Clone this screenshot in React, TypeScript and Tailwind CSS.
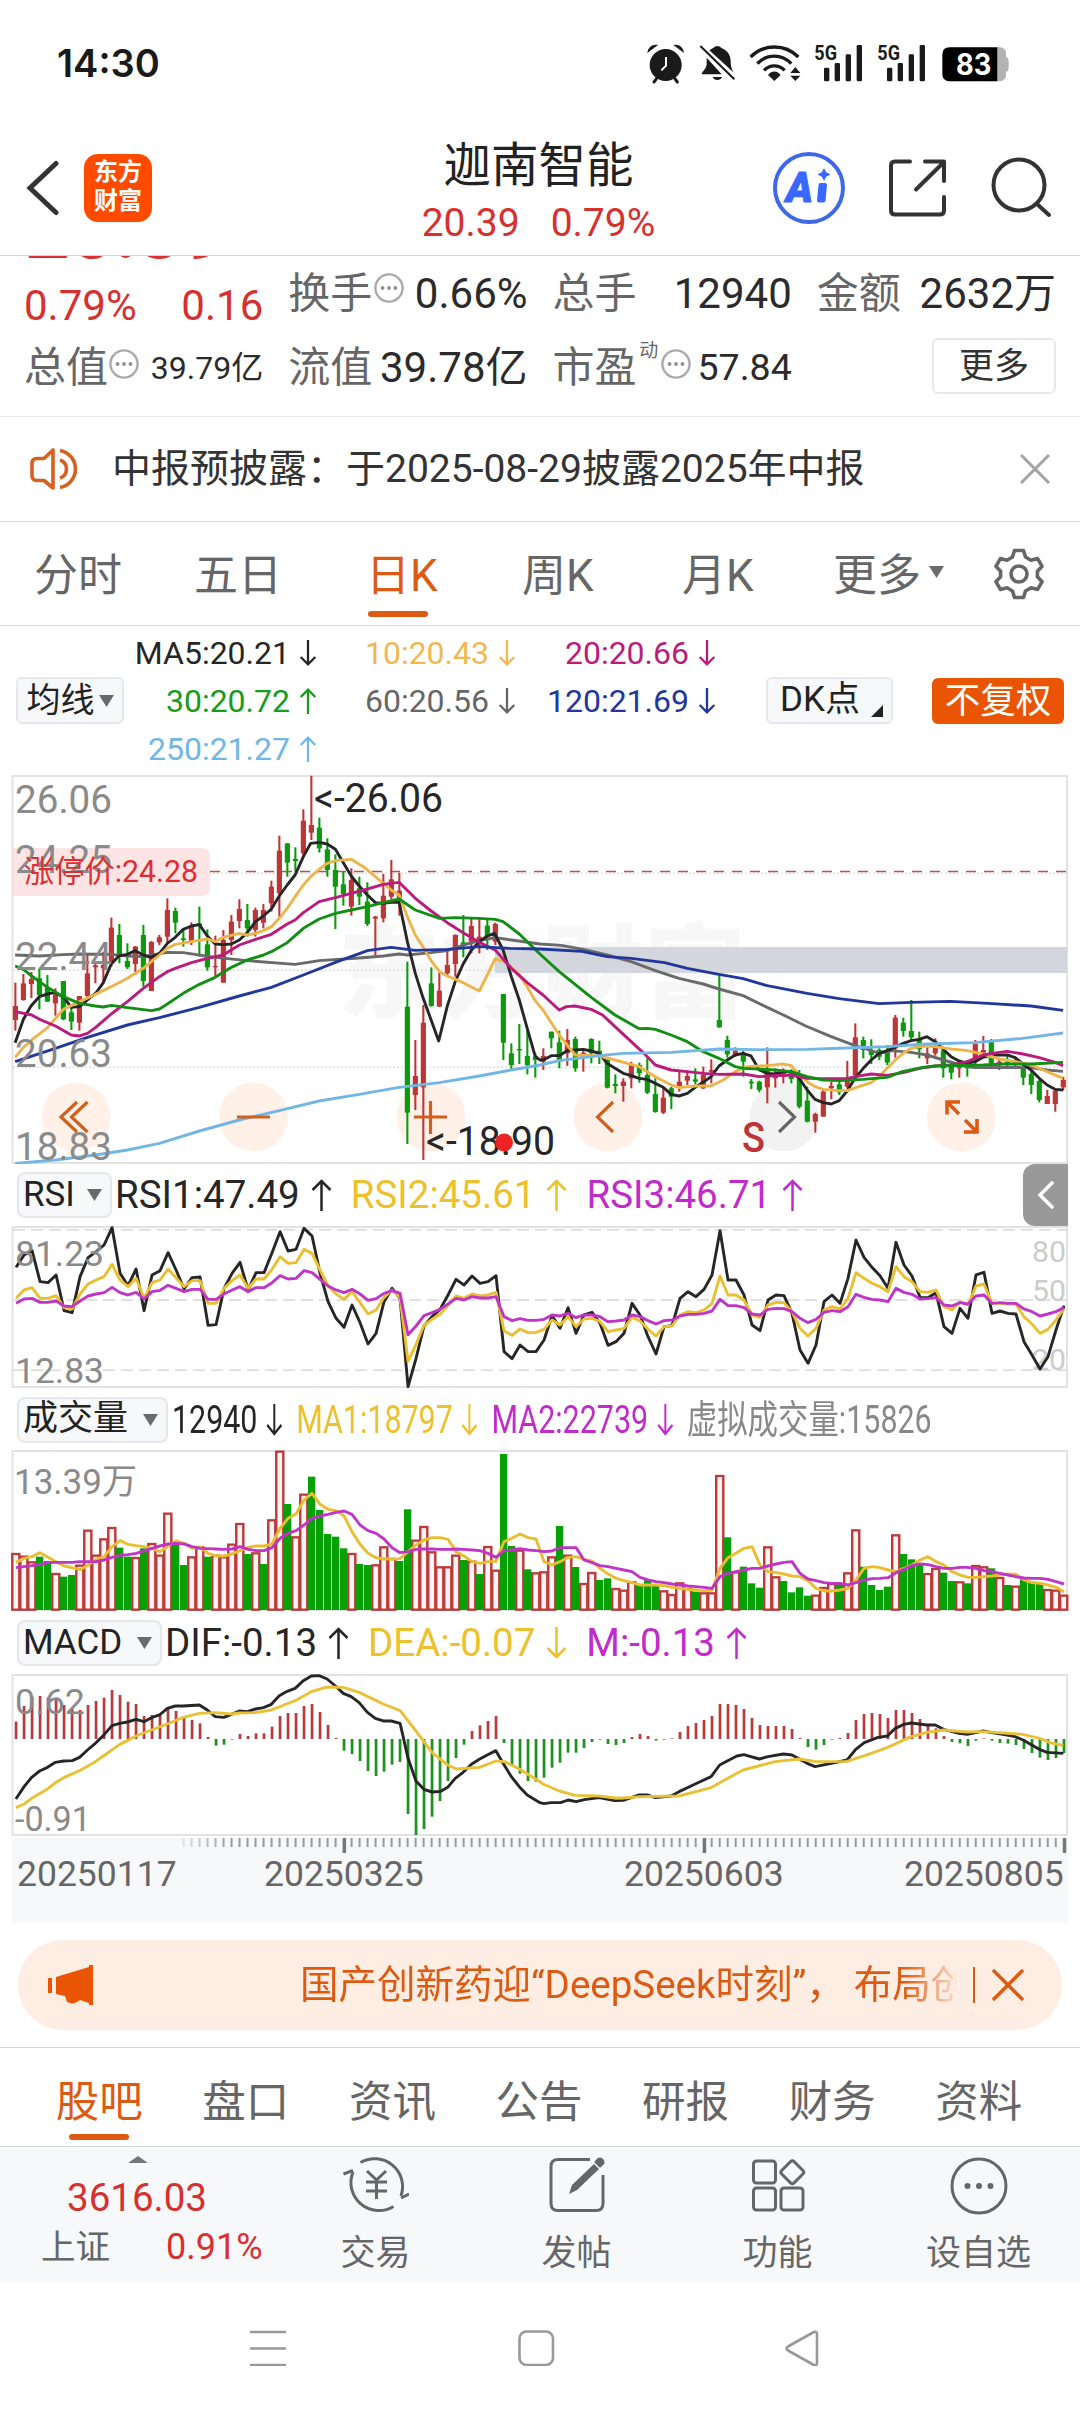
import React from "react";

// candle i sits at START + i * STEP on the shared plot grid (1 unit = 1/2.904 px wide, 1/3 px high)
const START = 44.7;
const STEP = 23.23;
const cx = (i: number) => START + i * STEP;

const RED = "#be3535";
const GREEN = "#0a9a0c";

// direction, high, low, body top, body bottom
const CANDLES = `r668,812,738,780 r642,722,670,720 r636,714,657,672 g625,748,655,705 g645,725,682,725 r685,767,703,730 g663,780,663,778 g735,810,757,785 r708,812,708,788 r580,712,640,708
r610,670,616,622 r575,665,615,625 r473,620,503,610 g492,610,525,585 g550,627,603,622 r558,645,560,612 g495,680,525,663 r543,693,546,693 r525,555,532,547 r415,550,450,530
g443,520,453,488 g510,560,535,540 r487,555,497,545 g440,590,490,497 g508,632,553,622 r527,653,618,622 r510,668,540,668 r465,585,485,540 r418,505,447,483 g432,530,480,505
r443,530,450,510 r432,505,450,488 r362,455,380,430 r227,470,272,400 g250,350,250,308 g262,335,297,303 r148,290,182,280 r47,240,195,218 g173,278,203,265 g235,350,268,330
g283,507,330,380 g335,437,373,402 r325,467,360,440 g350,435,385,410 g367,498,425,492 r468,587,470,476 r342,487,407,475 r300,418,358,410 r338,467,392,420 g605,1152,740,1058
r840,1050,948,1005 r735,1200,788,982 g622,740,670,738 r637,740,692,740 r570,645,615,640 r523,650,525,612 g465,592,547,558 r477,580,498,545 r477,580,530,545 g475,570,497,530
r488,555,492,545 g702,900,702,848 g850,928,880,915 g792,912,867,870 g810,943,888,915 g880,953,890,900 r865,930,888,905 g815,865,815,835 g812,925,847,905 r807,918,840,880
g830,935,837,925 r870,935,878,890 g835,910,837,880 g842,912,872,890 g895,985,900,983 g943,1000,972,978 r955,1025,965,978 r905,985,912,955 g908,968,915,940 g893,1002,945,998
g955,1058,1002,1056 r980,1062,1013,1058 g980,1047,985,1010 r932,995,965,980 r933,975,948,962 g925,973,958,965 r920,987,945,985 r898,970,930,935 g645,803,780,802 g827,893,840,883
r862,890,872,888 g872,950,880,905 g957,987,965,970 g962,997,965,990 r862,1030,930,982 r925,983,940,955 r925,970,935,950 g928,970,935,957 g930,1045,945,1040 g980,1087,1022,1085
r1058,1118,1062,1085 r990,1070,995,1070 r965,1018,978,985 g962,1005,973,997 r903,985,955,980 r790,955,832,945 g830,895,840,870 g838,912,870,885 g865,900,870,890 g855,915,870,908
r765,893,773,865 g773,830,788,813 g720,840,813,832 g815,895,840,868 r862,912,880,895 r835,887,862,880 g865,953,872,925 g905,958,912,938 r905,953,915,925 g900,950,912,925
r840,915,852,900 r828,885,870,878 g837,925,840,910 r895,930,905,915 g885,925,905,915 g890,922,903,915 g915,975,925,953 g928,1002,942,975 g960,1027,963,1020 r990,1032,1008,1032
r985,1055,992,1032 r950,990,960,982`
  .split(/\s+/)
  .map((s) => ({ up: s[0] === "r", v: s.slice(1).split(",").map(Number) }));

const MA_LINES = [
  {
    color: "#6a6a6a",
    points:
      "44,585 115,588 184,584 231,582 323,583 370,588 416,590 486,577 532,578 625,592 718,602 857,613 927,602 1043,594 1113,588 1159,582 1183,585 1252,578 1299,572 1345,555 1392,542 1438,533 1485,540 1568,552 1630,556 1694,568 1763,585 1833,605 1903,632 1972,655 2042,672 2088,687 2158,707 2228,742 2275,765 2340,798 2414,830 2483,857 2520,868 2553,880 2590,872 2645,877 2692,885 2740,900 2800,918 2830,923 2925,922 2994,923 3041,930 3087,934",
  },
  {
    color: "#262626",
    points:
      "44,848 68,778 90,738 114,710 138,702 158,697 185,712 207,742 231,740 254,720 280,697 300,668 323,612 345,588 370,583 393,572 416,585 438,592 463,580 486,550 509,532 532,508 556,498 579,494 602,528 625,552 648,554 672,552 695,540 718,518 742,485 765,468 788,447 811,408 834,375 857,345 881,290 902,250 927,247 950,252 974,268 997,308 1020,348 1043,378 1067,405 1090,428 1113,430 1136,427 1159,426 1183,545 1206,640 1229,715 1252,780 1274,843 1299,738 1322,665 1345,612 1369,570 1392,545 1415,528 1436,520 1461,570 1485,650 1508,720 1531,805 1554,888 1568,900 1577,900 1601,887 1624,887 1647,872 1670,870 1694,868 1717,873 1740,880 1763,910 1786,925 1810,940 1833,947 1856,955 1879,958 1903,970 1926,982 1949,1003 1972,1008 1996,1000 2019,982 2042,967 2065,950 2088,918 2112,900 2135,885 2158,880 2181,888 2205,930 2228,940 2251,942 2274,935 2298,935 2321,955 2344,990 2367,1018 2391,1028 2414,1032 2437,1022 2460,993 2483,955 2507,925 2530,900 2553,880 2576,872 2600,862 2623,850 2646,842 2669,838 2692,830 2716,845 2739,868 2762,890 2785,903 2809,910 2832,905 2855,892 2878,885 2902,885 2925,885 2948,893 2971,912 2994,930 3018,955 3041,975 3064,988 3088,990",
  },
  {
    color: "#eeb44c",
    points:
      "44,892 68,862 92,840 138,803 184,748 231,725 277,703 323,680 370,655 416,625 463,585 486,565 509,553 556,545 602,537 625,545 648,532 695,520 718,525 742,520 765,512 788,500 811,475 834,445 857,410 881,375 904,348 927,328 950,310 974,302 1020,298 1055,320 1090,350 1136,390 1159,405 1183,470 1206,525 1229,562 1252,602 1276,635 1299,648 1345,668 1392,693 1415,645 1438,597 1461,603 1485,622 1508,645 1531,680 1554,722 1577,750 1624,825 1670,885 1740,888 1786,900 1856,920 1903,950 1949,975 1972,983 2019,978 2065,978 2100,960 2135,935 2170,920 2228,917 2274,912 2298,917 2321,945 2344,965 2367,980 2391,988 2437,992 2460,992 2500,978 2530,968 2553,950 2576,925 2600,900 2623,880 2646,865 2680,858 2716,860 2762,867 2809,872 2855,882 2902,897 2948,905 2994,915 3041,935 3087,955",
  },
  {
    color: "#bb1b7c",
    points:
      "44,755 92,765 115,778 161,798 207,825 231,828 254,820 277,803 323,762 370,725 416,685 463,650 486,635 509,625 556,608 602,595 648,585 695,555 742,538 788,523 834,492 857,480 881,458 927,425 974,413 1020,400 1067,387 1113,373 1159,367 1206,415 1252,453 1299,488 1345,518 1392,547 1438,570 1485,625 1531,668 1577,705 1624,750 1645,740 1670,738 1717,748 1750,765 1786,800 1833,845 1870,880 1903,915 1949,930 1996,935 2042,940 2088,943 2158,942 2205,950 2251,947 2298,945 2344,955 2391,956 2460,956 2483,950 2530,942 2576,946 2623,938 2670,925 2716,918 2762,915 2809,905 2855,885 2902,877 2925,874 2971,882 3018,893 3064,907 3087,917",
  },
  {
    color: "#118f14",
    points:
      "44,618 68,628 92,648 138,682 184,710 231,730 277,738 300,741 323,736 370,743 440,752 463,747 486,732 532,700 579,673 625,652 672,622 718,600 765,585 788,575 834,548 881,505 927,477 974,460 1020,450 1067,440 1113,428 1159,417 1206,450 1276,475 1322,473 1392,475 1438,478 1461,485 1508,522 1568,582 1624,635 1717,712 1786,765 1856,806 1880,805 1903,808 1949,825 1996,845 2042,875 2088,895 2135,920 2160,925 2251,930 2298,935 2344,950 2391,960 2437,962 2506,958 2576,952 2620,935 2680,922 2716,918 2855,915 2920,912 2994,912 3087,907",
  },
  {
    color: "#22379c",
    points:
      "44,905 161,865 254,832 370,795 463,773 579,742 695,708 788,682 881,645 974,607 1067,572 1113,565 1136,562 1206,571 1299,568 1392,560 1480,565 1568,567 1690,574 1763,590 1833,595 1930,608 1996,625 2088,643 2158,656 2228,677 2344,700 2437,716 2553,731 2646,727 2760,724 2870,730 2994,738 3087,751",
  },
  {
    color: "#72b6e6",
    points:
      "44,1210 161,1200 277,1185 370,1170 463,1150 579,1113 695,1080 811,1052 927,1023 1043,1003 1159,982 1276,968 1392,948 1485,930 1568,915 1624,902 1740,887 1810,880 1949,877 2090,867 2200,869 2344,868 2460,864 2576,860 2692,852 2830,848 2970,835 3087,819",
  },
];

const RSI1 = [
  322, 285, 272, 365, 368, 345, 452, 458, 350, 293, 275, 255, 203, 340, 377, 327, 452, 345, 332, 278, 330, 387, 353, 351, 496, 494, 385, 340, 307, 390, 338, 338, 278,
  215, 273, 268, 205, 228, 340, 425, 475, 502, 435, 488, 552, 520, 425, 385, 415, 680, 595, 497, 470, 448, 405, 358, 375, 348, 370, 365, 347, 575, 596, 555, 575, 575,
  540, 467, 505, 443, 520, 465, 457, 490, 556, 545, 520, 430, 465, 530, 582, 500, 497, 415, 395, 410, 388, 345, 212, 360, 360, 405, 495, 512, 420, 405, 407, 460, 570,
  610, 555, 425, 405, 430, 355, 240, 292, 322, 347, 385, 247, 315, 348, 412, 413, 398, 500, 520, 445, 475, 345, 337, 460, 453, 460, 462, 545, 585, 627, 590, 510, 437,
];
const RSI2 = [
  415, 390, 383, 415, 415, 407, 443, 447, 402, 372, 360, 350, 313, 360, 380, 355, 415, 368, 360, 327, 353, 380, 362, 362, 430, 430, 385, 362, 345, 385, 357, 357, 328,
  290, 310, 308, 268, 280, 330, 378, 402, 418, 395, 428, 462, 450, 412, 390, 412, 604, 553, 495, 478, 463, 435, 408, 415, 402, 408, 405, 397, 512, 526, 507, 518, 517,
  508, 480, 495, 470, 500, 477, 475, 485, 515, 510, 505, 472, 483, 508, 528, 500, 498, 465, 455, 458, 450, 430, 348, 405, 405, 420, 465, 472, 435, 427, 428, 455, 505,
  528, 505, 450, 440, 447, 415, 338, 355, 370, 380, 395, 320, 350, 365, 395, 397, 390, 440, 450, 425, 435, 378, 372, 430, 430, 432, 432, 470, 492, 520, 508, 480, 445,
];
const RSI3 = [
  430, 417, 415, 427, 427, 423, 438, 440, 423, 408, 402, 398, 382, 398, 405, 397, 417, 395, 391, 376, 385, 395, 388, 388, 418, 418, 402, 390, 380, 395, 383, 383, 368,
  347, 357, 355, 332, 338, 358, 378, 390, 398, 388, 402, 421, 416, 400, 392, 400, 524, 498, 467, 458, 448, 432, 415, 420, 410, 414, 414, 410, 470, 482, 476, 481, 481,
  478, 465, 468, 460, 473, 465, 465, 470, 485, 483, 480, 465, 470, 482, 492, 482, 480, 468, 463, 463, 460, 453, 418, 437, 437, 443, 462, 465, 448, 445, 446, 455, 475,
  488, 478, 457, 452, 455, 440, 403, 412, 418, 420, 425, 385, 397, 403, 417, 416, 413, 435, 438, 428, 432, 408, 405, 430, 428, 430, 430, 447, 455, 468, 462, 455, 443,
];

const VOLUMES =
  "r1180 r1188 r1205 g1190 g1203 r1240 g1250 g1245 r1215 r1110 r1185 r1136 r1102 g1163 g1190 r1192 g1165 r1150 r1185 r1059 g1155 g1215 r1190 r1160 g1190 r1185 r1190 r1152 r1090 g1182 r1178 g1212 r1079 r873 g1032 r1130 r1002 g950 g1050 g1122 g1130 g1165 r1180 g1212 g1215 r1214 r1160 r1195 g1203 g1048 r1140 r1099 r1175 r1220 r1220 r1185 g1200 r1203 g1242 r1159 r1230 g882 g1158 r1170 g1228 r1238 r1235 r1190 g1098 r1185 g1221 r1270 r1237 g1260 g1255 r1285 r1290 r1265 g1275 g1258 g1275 r1292 r1303 r1268 r1285 g1295 r1298 r1298 r946 g1132 r1235 g1220 g1270 g1283 r1160 r1250 g1263 g1297 g1282 g1307 r1305 r1282 r1270 g1270 r1238 r1109 g1220 g1275 g1290 g1280 r1124 g1182 g1198 g1213 r1240 r1225 g1238 g1263 r1265 g1270 r1216 r1220 g1225 r1252 g1275 r1278 g1258 g1265 g1268 r1288 r1290 r1305"
    .split(" ")
    .map((s) => ({ up: s[0] === "r", y: Number(s.slice(1)) }));
const VOL_MA1 = [
  1207, 1195, 1190, 1178, 1192, 1205, 1218, 1223, 1229, 1215, 1198, 1190, 1160, 1142, 1153, 1157, 1160, 1165, 1175, 1158, 1143, 1150, 1165, 1160, 1180, 1188, 1188, 1182,
  1172, 1162, 1158, 1158, 1152, 1105, 1075, 1062, 1020, 1000, 1033, 1048, 1052, 1068, 1115, 1153, 1180, 1193, 1197, 1197, 1196, 1175, 1155, 1140, 1133, 1133, 1138, 1175,
  1188, 1205, 1210, 1205, 1204, 1145, 1135, 1122, 1133, 1137, 1205, 1215, 1205, 1192, 1190, 1198, 1203, 1225, 1242, 1255, 1262, 1268, 1275, 1275, 1275, 1277, 1282, 1285,
  1288, 1290, 1292, 1290, 1225, 1193, 1180, 1165, 1160, 1215, 1235, 1238, 1242, 1248, 1250, 1262, 1285, 1293, 1293, 1290, 1285, 1260, 1225, 1220, 1223, 1230, 1235, 1225,
  1215, 1200, 1190, 1205, 1215, 1235, 1245, 1252, 1252, 1250, 1248, 1245, 1242, 1243, 1260, 1268, 1270, 1275, 1282, 1295,
];
const VOL_MA2 = [
  1223, 1220, 1217, 1213, 1208, 1207, 1207, 1207, 1205, 1205, 1205, 1200, 1192, 1186, 1184, 1180, 1173, 1165, 1158, 1152, 1150, 1152, 1160, 1165, 1166, 1167, 1168, 1167,
  1160, 1168, 1172, 1172, 1163, 1135, 1120, 1112, 1095, 1075, 1068, 1063, 1057, 1053, 1063, 1095, 1112, 1120, 1137, 1163, 1178, 1175, 1168, 1167, 1167, 1168, 1168, 1167,
  1168, 1170, 1172, 1180, 1192, 1172, 1170, 1166, 1170, 1172, 1175, 1173, 1163, 1163, 1163, 1200, 1208, 1217, 1220, 1225, 1230, 1235, 1252, 1260, 1265, 1268, 1272, 1275,
  1278, 1280, 1282, 1285, 1250, 1240, 1235, 1230, 1225, 1225, 1218, 1212, 1207, 1205, 1240, 1257, 1262, 1268, 1270, 1270, 1275, 1268, 1260, 1256, 1255, 1253, 1238, 1228,
  1217, 1212, 1214, 1220, 1225, 1225, 1222, 1222, 1225, 1232, 1235, 1240, 1245, 1250, 1254, 1255, 1255, 1258, 1265, 1272,
];

const MACD_BARS = [
  365, 318, 290, 288, 292, 300, 315, 325, 330, 315, 303, 293, 270, 285, 305, 312, 348, 345, 345, 325, 333, 352, 360, 370, 411, 437, 434, 419, 402, 408, 400, 400, 380,
  348, 339, 339, 318, 312, 336, 375, 414, 452, 462, 483, 513, 528, 515, 494, 486, 642, 705, 687, 650, 603, 543, 474, 434, 393, 376, 363, 348, 429, 495, 521, 543, 545,
  533, 503, 488, 458, 458, 444, 426, 419, 432, 435, 429, 411, 402, 408, 422, 419, 415, 396, 378, 369, 360, 348, 312, 312, 315, 327, 354, 375, 378, 378, 378, 387, 414,
  441, 449, 435, 419, 414, 399, 360, 342, 339, 342, 354, 330, 330, 339, 357, 372, 385, 408, 426, 430, 438, 422, 415, 422, 429, 431, 435, 447, 459, 473, 480, 474, 459,
];
const DIF =
  "46,597 70,560 92,532 115,513 138,502 161,487 185,483 210,482 231,472 254,450 277,430 300,407 325,377 348,370 370,366 395,358 418,365 440,353 463,345 486,325 509,318 532,318 579,315 602,330 625,350 650,352 672,343 695,333 718,335 742,327 765,323 788,313 811,287 834,274 857,265 881,242 904,228 927,227 950,237 974,258 997,280 1020,290 1043,308 1067,337 1090,355 1113,363 1136,363 1162,370 1185,475 1208,543 1231,568 1255,576 1280,574 1300,562 1322,535 1345,517 1369,493 1392,478 1415,465 1440,452 1461,490 1485,530 1508,560 1531,585 1568,608 1580,611 1600,608 1628,608 1650,600 1673,605 1697,599 1740,593 1785,602 1810,601 1856,585 1880,585 1903,593 1949,588 1972,575 2019,552 2065,530 2090,495 2112,483 2140,468 2160,464 2205,477 2230,470 2275,462 2300,465 2344,490 2367,500 2414,490 2460,480 2485,448 2510,428 2550,412 2577,408 2600,385 2625,373 2646,369 2692,375 2716,375 2740,388 2785,400 2809,403 2855,393 2880,398 2925,405 2948,410 2971,420 3018,448 3041,457 3088,460";
const DEA =
  "46,623 70,612 92,595 138,567 161,548 185,533 231,512 277,485 300,468 348,433 370,422 395,408 440,390 486,372 532,352 579,340 625,338 672,342 695,339 742,338 788,330 857,302 904,275 950,261 997,262 1043,277 1113,312 1162,332 1208,393 1255,458 1300,495 1325,507 1392,502 1440,483 1465,485 1508,507 1568,545 1577,552 1624,573 1670,586 1740,588 1786,594 1810,594 1860,590 1972,588 2065,563 2090,548 2158,510 2251,485 2321,477 2370,485 2460,484 2530,460 2576,443 2646,410 2692,397 2740,390 2809,396 2855,395 2970,403 3020,415 3050,428 3088,437";

const toPoints = (values: number[]) => values.map((y, i) => `${cx(i) + 2},${y}`).join(" ");

const Line = ({ points, color, width = 2.9 }: { points: string; color: string; width?: number }) => (
  <polyline points={points} fill="none" stroke={color} strokeWidth={width} strokeLinejoin="round" vectorEffect="non-scaling-stroke" />
);

// Moves the plot grid so that grid row `base * 3` is the top of the panel
const Grid = ({ base, children }: { base: number; children: React.ReactNode }) => (
  <g transform={`translate(0 ${-base}) scale(0.34435 0.33333)`}>{children}</g>
);

interface LabelProps {
  x: number;
  y: number;
  w: number;
  size?: number;
  color?: string;
  children: string;
}

const Label = ({ x, y, w, size = 35, color = "#8a8a8a", children }: LabelProps) => (
  <text x={x} y={y} fontSize={size} fill={color} textLength={w} lengthAdjust="spacingAndGlyphs">
    {children}
  </text>
);

const Arrow = ({ up = false, small = false }: { up?: boolean; small?: boolean }) => (
  <svg viewBox="0 0 20 32" className={small ? "h-[26px] w-[18px]" : "h-8 w-[21px]"} fill="none" stroke="currentColor" strokeWidth={small ? 2.8 : 2.5}>
    {up ? <path d="M10 32V2M1 11l9-9 9 9" /> : <path d="M10 0v30M1 21l9 9 9-9" />}
  </svg>
);

const Caret = () => (
  <svg viewBox="0 0 15 12" className="h-3 w-[15px]" fill="#6a6a6a">
    <path d="M0 0h15L7.5 12z" />
  </svg>
);

const InfoDot = () => (
  <svg viewBox="0 0 30 30" className="h-[30px] w-[30px]" fill="none" stroke="#aaaaaa" strokeWidth="2.4">
    <circle cx="15" cy="15" r="13.6" />
    <g fill="#8f8f8f" stroke="none">
      <circle cx="8.6" cy="15" r="1.9" />
      <circle cx="15" cy="15" r="1.9" />
      <circle cx="21.4" cy="15" r="1.9" />
    </g>
  </svg>
);

const StatusBar = () => (
  <div className="flex h-[120px] items-center justify-between pt-[5px] pr-[70px] pl-[57px]">
    <span className="font-[Inter] text-[38px] leading-none font-semibold text-[#1a1a1a]">14:30</span>
    <svg viewBox="80 38 1092 120" className="h-10 w-[364px] overflow-visible" fill="#1a1a1a">
      {/* alarm */}
      <circle cx="139" cy="104" r="48" />
      <path d="M84 68c2-18 16-28 32-24zM194 68c-2-18-16-28-32-24z" />
      <path d="M112 144l-8 11M166 144l8 11" stroke="#1a1a1a" strokeWidth="9" strokeLinecap="round" />
      <path d="M140 80v26l-14 14" fill="none" stroke="#fff" strokeWidth="6" />
      {/* muted bell */}
      <path d="M262 82v18c0 16-14 22-15 32h60zM270 60c8-6 16-8 18-12h12c4 6 34 12 34 44 0 14 2 22 8 34z" />
      <path d="M280 140h28c-4 12-24 12-28 0z" />
      <path d="M243 47l102 100" stroke="#1a1a1a" strokeWidth="6" />
      {/* wifi */}
      <g fill="none" stroke="#1a1a1a" strokeWidth="10">
        <path d="M394 80c40-40 103-40 143 0" />
        <path d="M414 100c29-30 73-30 102 0" />
        <path d="M434 120c18-18 44-18 62 0" />
      </g>
      <path d="M446 134c11-14 27-14 38 0l-19 18z" />
      <path d="M513 128l15-18 15 18zM513 136l15 16 15-16z" />
      {/* signal bars */}
      <g id="bars">
        <rect x="614" y="112" width="16" height="41" rx="4" />
        <rect x="646" y="98" width="16" height="55" rx="4" />
        <rect x="679" y="72" width="16" height="81" rx="4" />
        <rect x="712" y="44" width="16" height="109" rx="4" />
      </g>
      <use href="#bars" x="189" />
      <g fontFamily="Roboto, sans-serif" fontWeight="700" fontSize="60">
        <text x="585" y="88" textLength="68" lengthAdjust="spacingAndGlyphs">5G</text>
        <text x="774" y="88" textLength="68" lengthAdjust="spacingAndGlyphs">5G</text>
      </g>
      {/* battery */}
      <path d="M1134 51h4c15 0 22 7 22 18v10q8 3 8 12v22q0 9-8 12v8c0 12-7 20-22 20h-4z" fill="#b3b3b3" />
      <path d="M991 51h143v102H991q-22 0-22-22V73q0-22 22-22z" fill="#000" />
      <text x="1010" y="135" fontFamily="Inter, sans-serif" fontWeight="700" fontSize="88" fill="#fff" textLength="106" lengthAdjust="spacingAndGlyphs">
        83
      </text>
    </svg>
  </div>
);

const Header = () => (
  <header className="flex h-[136px] items-center justify-between border-b border-[#d6d6d6] pr-[27px] pl-[26px]">
    <div className="flex w-[270px] items-center gap-[25px]">
      <svg viewBox="0 0 33 56" className="h-14 w-[33px]" fill="none" stroke="#333" strokeWidth="5" strokeLinecap="round">
        <path d="M30 3.500L4 28l26 24.500" />
      </svg>
      <p className="flex h-[68px] w-[68px] items-center justify-center rounded-[14px] bg-[#ff4a00] pb-[2px] text-center text-[24px] leading-[29px] font-bold text-white">
        东方
        <br />
        财富
      </p>
    </div>
    <div className="flex flex-col items-center pt-[11px] pl-[8px]">
      <h1 className="text-[47.500px] leading-[56px] text-[#222]">迦南智能</h1>
      <div className="mt-[4px] flex gap-[31px] text-[39px] leading-[50px] text-[#d6302f]">
        <span>20.39</span>
        <span>0.79%</span>
      </div>
    </div>
    <svg viewBox="0 0 280 72" className="h-[72px] w-[280px]" fill="none" stroke="#333" strokeWidth="4" strokeLinecap="round" strokeLinejoin="round">
      <circle cx="36" cy="36" r="34" stroke="#3f68e8" />
      <text x="13" y="49.500" fontSize="42" fontWeight="900" fontStyle="italic" fill="#3868ff" stroke="#3868ff" strokeWidth="1" textLength="27" lengthAdjust="spacingAndGlyphs">
        A
      </text>
      <path d="M47.500 33h4.500l-1.500 15.500H46z" fill="#3868ff" stroke="#3868ff" />
      <path d="M51 16l2.200 4.300 4.300 2.200-4.300 2.200-2.200 4.300-2.200-4.300-4.300-2.200 4.300-2.200z" fill="#3868ff" stroke="none" />
      <path d="M137 9.500h-15q-4 0-4 4v45q0 4 4 4h45q4 0 4-4V45" />
      <path d="M152 9.500h19V29M170 11l-27 26.500" />
      <circle cx="246" cy="33" r="25.500" />
      <path d="M264 52l12 11" />
    </svg>
  </header>
);

const Stat = ({ label, value, dot = false }: { label: string; value: string; dot?: boolean }) => (
  <div className="flex items-center justify-between text-[42px]">
    <span className="flex items-center text-[#666]">
      {label}
      {dot && (
        <span className="-mt-3 ml-[2px]">
          <InfoDot />
        </span>
      )}
    </span>
    <span className="text-[#2b2b2b]">{value}</span>
  </div>
);

const Quote = () => (
  <section className="h-[161px] overflow-hidden border-b border-[#ececec] px-[24px]">
    {/* big price has scrolled under the header */}
    <div className="h-[6px] overflow-hidden">
      <div className="-mt-[69px] ml-[1px] text-[78px] leading-[90px] font-bold text-[#dd2f2d]">20.39</div>
    </div>
    <div className="-mt-[7px] grid grid-cols-4 gap-x-[25px] leading-none">
      <div className="flex h-[78px] items-center justify-between pt-[23px] text-[42px] text-[#d6302f]">
        <span>0.79%</span>
        <span>0.16</span>
      </div>
      <Stat label="换手" value="0.66%" dot />
      <Stat label="总手" value="12940" />
      <Stat label="金额" value="2632万" />
      <div className="flex h-[70px] items-center justify-between text-[#666]">
        <span className="text-[42px]">总值</span>
        <span className="-mt-2 -ml-[10px]">
          <InfoDot />
        </span>
        <span className="text-[32px] text-[#2b2b2b]">39.79亿</span>
      </div>
      <Stat label="流值" value="39.78亿" />
      <div className="flex items-center justify-between text-[42px] text-[#666]">
        <span>市盈</span>
        <span className="-mt-9 -ml-1 text-[19px]">动</span>
        <span className="-mt-2 -ml-1">
          <InfoDot />
        </span>
        <span className="text-[37.500px] text-[#2b2b2b]">57.84</span>
      </div>
      <div className="flex items-center justify-end pb-1">
        <button className="h-[56px] w-[124px] rounded-md border-2 border-[#e8e8e8] text-[35px] text-[#333]">更多</button>
      </div>
    </div>
  </section>
);

const Announcement = () => (
  <section className="flex h-[105px] items-center border-b border-[#d6d6d6] pr-[30px] pl-[29px]">
    <svg viewBox="0 0 52 44" className="h-11 w-[52px]" fill="none" stroke="#d6601f" strokeWidth="3.600" strokeLinejoin="round">
      <path d="M24 3v38l-9-7.500H8q-5 0-5-5v-12q0-5 5-5h7z" />
      <path d="M31 13a9.500 9.500 0 0 1 0 18M31 3.500a18.800 18.800 0 0 1 0 37" />
    </svg>
    <p className="ml-[31px] text-[39px] text-[#333]">中报预披露：于2025-08-29披露2025年中报</p>
    <svg viewBox="0 0 30 30" className="ml-auto h-[30px] w-[30px]" stroke="#a3a3a3" strokeWidth="3">
      <path d="M1 1l28 28M29 1L1 29" />
    </svg>
  </section>
);

const PeriodTabs = () => (
  <nav className="flex h-[104px] items-center border-b border-[#d6d6d6] pl-[34px] text-[44px] text-[#666]">
    <span className="w-[160px] pt-[5px]">分时</span>
    <span className="w-[172px] pt-[5px]">五日</span>
    <span className="relative w-[156px] pt-[5px] text-[#dd5a12]">
      日K
      <i className="absolute -bottom-[8px] left-[2px] h-[6px] w-[60px] rounded-full bg-[#dd5a12]" />
    </span>
    <span className="w-[160px] pt-[5px]">周K</span>
    <span className="w-[151px] pt-[5px]">月K</span>
    <span className="flex w-[160px] items-center gap-[8px] pt-[5px]">
      更多
      <span className="-mt-2 flex">
        <Caret />
      </span>
    </span>
    <svg viewBox="0 0 52 52" className="h-[52px] w-[52px]" fill="none" stroke="#666" strokeWidth="3.600" strokeLinejoin="round">
      <path d="M21.500 2.500h9l2 6.500 5.500 3.200 6.600-1.600 4.500 7.700-4.700 5v5.400l4.700 5-4.500 7.700-6.600-1.600-5.500 3.200-2 6.500h-9l-2-6.500-5.500-3.200-6.600 1.600-4.500-7.700 4.700-5v-5.400l-4.700-5 4.500-7.700 6.600 1.600 5.500-3.200z" />
      <circle cx="26" cy="26" r="8" />
    </svg>
  </nav>
);

const MaItem = ({ text, color, up = false }: { text: string; color: string; up?: boolean }) => (
  <span className={`flex items-center justify-end gap-[9px] ${color}`}>
    {text}
    <Arrow up={up} small />
  </span>
);

const MaLegend = () => (
  <div className="flex h-[149px] items-center pr-[16px] pl-[16px]">
    <button className="flex h-[47px] w-[108px] items-center justify-center gap-[4px] rounded-md border-2 border-[#e5e7ea] bg-[#f7f8fa] text-[34px] text-[#222]">
      均线
      <Caret />
    </button>
    <div className="grid grid-cols-[193px_199px_200px] pt-px text-[32px] leading-[48px]">
      <MaItem text="MA5:20.21" color="text-[#262626]" />
      <MaItem text="10:20.43" color="text-[#f0b850]" />
      <MaItem text="20:20.66" color="text-[#bb1b7c]" />
      <MaItem text="30:20.72" color="text-[#189a1a]" up />
      <MaItem text="60:20.56" color="text-[#666]" />
      <MaItem text="120:21.69" color="text-[#22379c]" />
      <MaItem text="250:21.27" color="text-[#72b6e6]" up />
    </div>
    <button className="ml-[50px] flex h-[47px] w-[127px] items-center rounded-md border-2 border-[#e5e7ea] bg-[#f7f8fa] pl-[12px] text-[35px] text-[#222]">
      DK点
      <svg viewBox="0 0 12 12" className="mt-[20px] ml-[11px] h-3 w-3" fill="#222">
        <path d="M12 0v12H0z" />
      </svg>
    </button>
    <button className="ml-auto h-[46px] w-[132px] rounded-md bg-[#ea5504] text-[35.500px] leading-[44px] text-white">不复权</button>
  </div>
);

const Frame = ({ h }: { h: number }) => <rect x="12.500" y="1" width="1054.500" height={h} fill="none" stroke="#e2e2e2" strokeWidth="2" />;

const CandleChart = () => (
  <svg viewBox="0 0 1080 389" className="block h-[389px] w-full">
    <text x="338" y="235" fontSize="102" fontWeight="900" fill="#f7f7f7" textLength="408" lengthAdjust="spacingAndGlyphs">
      东方财富
    </text>
    {[98.300, 195.300, 292.300].map((y) => (
      <line key={y} x1="13" x2="1067" y1={y} y2={y} stroke="#dedede" strokeWidth="1.600" strokeDasharray="2 2" />
    ))}
    <Frame h={387} />
    <line x1="210" x2="1067" y1="96.500" y2="96.500" stroke="#bf5050" strokeWidth="1.600" strokeDasharray="10 8" />
    <rect x="495" y="172" width="572" height="26" fill="#d3d6dc" />
    <g fill="#fff0e8">
      {[76, 253.500, 431, 608, 961.500].map((x) => (
        <circle key={x} cx={x} cy="342" r="34.500" />
      ))}
      <circle cx="784" cy="342" r="34.500" fill="#f2f2f2" />
    </g>
    <Grid base={15}>
      {CANDLES.map(({ up, v }, i) => (
        <g key={i} fill={up ? RED : GREEN}>
          <rect x={cx(i) - 3} y={v[0]} width="6" height={v[1] - v[0]} />
          <rect x={cx(i) - 7.500} y={v[2]} width="15" height={Math.max(v[3] - v[2], 4)} />
        </g>
      ))}
      {MA_LINES.map((line) => (
        <Line key={line.color} {...line} />
      ))}
    </Grid>
    <path d="M12 73h190q8 0 8 8v32q0 8-8 8H12z" fill="#fcdcdc" fillOpacity="0.75" />
    <g>
      <Label x={15} y={38} w={97} size={39}>26.06</Label>
      <Label x={15} y={98} w={97} size={39}>24.25</Label>
      <Label x={15} y={194.500} w={97} size={39}>22.44</Label>
      <Label x={15} y={291.500} w={97} size={39}>20.63</Label>
      <Label x={15} y={385} w={97} size={39}>18.83</Label>
      <Label x={24} y={107} w={174} size={31} color="#dc3030">涨停价:24.28</Label>
      <Label x={314} y={37} w={129} size={40} color="#262626">&lt;-26.06</Label>
      <Label x={426} y={380} w={129} size={40} color="#262626">&lt;-18.90</Label>
    </g>
    <circle cx="504" cy="367.500" r="9" fill="#ee2222" />
    <g fill="none" stroke="#d0601c" strokeWidth="3.200">
      <path d="M77 327L61 342l16 15M87.500 327l-16 15 16 15" />
      <path d="M237 342h33M414 342h33M430.500 326v33" />
      <path d="M613 327l-15.500 15 15.500 15" />
      <path d="M779 327l15.500 15-15.500 15" stroke="#666" />
      <path d="M947 339.500V327h13M947 327l12 12M977 344v13h-13M977 357l-12-12" stroke="#dd5a12" strokeWidth="3.600" />
    </g>
    <text x="742" y="377" fontSize="42" fontWeight="500" fill="#bf3434" textLength="23" lengthAdjust="spacingAndGlyphs">
      S
    </text>
  </svg>
);

const IndicatorButton = ({ name, className }: { name: string; className: string }) => (
  <button className={`flex h-[46px] shrink-0 items-center justify-between rounded-lg border-2 border-[#e5e7ea] bg-[#f7f8fa] pr-[8px] pl-[4px] text-[35px] text-[#222] ${className}`}>
    {name}
    <Caret />
  </button>
);

const Reading = ({ text, color, up = false }: { text: string; color: string; up?: boolean }) => (
  <span className={`flex items-center gap-[11px] text-[38.500px] ${color}`}>
    {text}
    <Arrow up={up} />
  </span>
);

const RsiPanel = () => (
  <section>
    <div className="flex h-[62px] items-center pl-[17px]">
      <IndicatorButton name="RSI" className="w-[95px]" />
      <div className="ml-[3px] flex gap-[19px]">
        <Reading text="RSI1:47.49" color="text-[#262626]" up />
        <Reading text="RSI2:45.61" color="text-[#ecc12c]" up />
        <Reading text="RSI3:46.71" color="text-[#c22bcb]" up />
      </div>
      <div className="mr-[12px] ml-auto flex h-[62px] w-[45px] items-center justify-center rounded-l-xl bg-[#999]">
        <svg viewBox="0 0 16 28" className="h-7 w-4" fill="none" stroke="#fff" strokeWidth="3.600" strokeLinecap="round">
          <path d="M14 2L2 14l12 12" />
        </svg>
      </div>
    </div>
    <svg viewBox="0 0 1080 162" className="block h-[162px] w-full">
      <Frame h={160} />
      {[3.700, 74, 144.300].map((y) => (
        <line key={y} x1="13" x2="1067" y1={y} y2={y} stroke="#d8d8d8" strokeWidth="1.600" strokeDasharray="12 6" />
      ))}
      <Label x={1032} y={36} w={34} size={30} color="#cccccc">80</Label>
      <Label x={1032} y={74.500} w={34} size={30} color="#cccccc">50</Label>
      <Label x={1032} y={143.500} w={34} size={30} color="#cccccc">20</Label>
      <Grid base={66}>
        <Line points={toPoints(RSI1)} color="#262626" />
        <Line points={toPoints(RSI2)} color="#eac030" />
        <Line points={toPoints(RSI3)} color="#bf35c6" />
      </Grid>
      <Label x={15} y={40} w={89}>81.23</Label>
      <Label x={15} y={157} w={89}>12.83</Label>
    </svg>
  </section>
);

const VolumePanel = () => (
  <section>
    <div className="flex h-[62px] items-center pt-px pl-[17px]">
      <IndicatorButton name="成交量" className="w-[151px]" />
      <div className="ml-[4px] flex origin-left scale-x-[0.79] gap-[17px] whitespace-nowrap">
        <Reading text="12940" color="text-[#262626]" />
        <Reading text="MA1:18797" color="text-[#ecc12c]" />
        <Reading text="MA2:22739" color="text-[#c22bcb]" />
        <span className="text-[38.500px] text-[#888]">虚拟成交量:15826</span>
      </div>
    </div>
    <svg viewBox="0 0 1080 161" className="block h-[161px] w-full">
      <Frame h={160} />
      <Label x={14} y={43.500} w={123}>13.39万</Label>
      <Grid base={290}>
        {VOLUMES.map(({ up, y }, i) =>
          up ? (
            <rect key={i} x={cx(i) - 9} y={y + 2} width="20.500" height={1347 - y} fill="#fff4f3" stroke="#bb3a3a" strokeWidth="7" />
          ) : (
            <rect key={i} x={cx(i) - 10} y={y} width="21.500" height={1350 - y} fill="#07a007" />
          ),
        )}
        <Line points={toPoints(VOL_MA1)} color="#e9bd30" />
        <Line points={toPoints(VOL_MA2)} color="#bf35c6" />
      </Grid>
    </svg>
  </section>
);

const MacdPanel = () => (
  <section>
    <div className="flex h-[63px] items-center pt-px pl-[17px]">
      <IndicatorButton name="MACD" className="w-[145px]" />
      <div className="ml-[3px] flex gap-[19px]">
        <Reading text="DIF:-0.13" color="text-[#262626]" up />
        <Reading text="DEA:-0.07" color="text-[#ecc12c]" />
        <Reading text="M:-0.13" color="text-[#c22bcb]" up />
      </div>
    </div>
    <svg viewBox="0 0 1080 162" className="block h-[162px] w-full">
      <Frame h={160} />
      <Grid base={74}>
        {MACD_BARS.map((y, i) => (
          <rect key={i} x={cx(i) - 2} y={Math.min(y, 417)} width="8" height={Math.max(Math.abs(y - 417), 2)} fill={y < 417 ? "#b83c3c" : "#1d9420"} />
        ))}
        <Line points={DIF} color="#262626" />
        <Line points={DEA} color="#e9c136" />
      </Grid>
      <Label x={15} y={40} w={70}>0.62</Label>
      <Label x={15} y={157} w={76}>-0.91</Label>
    </svg>
  </section>
);

const DateRuler = () => (
  <div className="mx-[12px] mt-[2px] h-[84px] bg-[#f7f8fa]">
    <svg viewBox="0 0 1056 18" className="block h-[18px] w-full">
      {Array.from({ length: 111 }, (_, k) => {
        const i = k + 21;
        const major = i === 41 || i === 86 || i === 131;
        return (
          <rect
            key={i}
            x={2.500 + i * 8.002}
            width={major ? 3.500 : 2}
            height={major ? 15 : 9}
            fill={major ? "#777777" : "#999999"}
            opacity={Math.min(1, 0.25 + k * 0.13)}
          />
        );
      })}
    </svg>
    <div className="grid grid-cols-[247px_360px_361px_1fr] pl-[5px] text-[35.500px] leading-[36px] text-[#666]">
      <span>20250117</span>
      <span>20250325</span>
      <span>20250603</span>
      <span className="-ml-[81px]">20250805</span>
    </div>
  </div>
);

const Banner = () => (
  <section className="border-b border-[#d6d6d6] pt-[18px] pb-[17px]">
    <div className="mx-[18px] flex h-[90px] items-center rounded-full bg-[#fdede3] text-[#dd5a12]">
      <svg viewBox="0 0 48 42" className="ml-[29px] h-[42px] w-12" fill="#ea5504">
        <path d="M1 14h4v15H1zM9 13L42 3V1h4v40h-4v-2l-9-3q-7 5-10 3l-3-1-2-6-9-2z" />
      </svg>
      <p className="ml-[205px] w-[656px] overflow-hidden text-[38.500px] whitespace-nowrap [mask-image:linear-gradient(to_right,#000_92%,transparent_101%)]">
        国产创新药迎“DeepSeek时刻”，<span className="ml-[9px]">布局创</span>
      </p>
      <i className="ml-[17px] h-[36px] w-[1.500px] bg-[#dd5a12]" />
      <svg viewBox="0 0 32 32" className="ml-[17px] h-8 w-8" stroke="#dd5a12" strokeWidth="3.400">
        <path d="M1 1l30 30M31 1L1 31" />
      </svg>
    </div>
  </section>
);

const SectionTabs = () => (
  <nav className="grid h-[99px] grid-cols-7 items-center border-b border-[#d6d6d6] pt-[11px] pr-[28px] pl-[26px] text-center text-[43.500px] text-[#666]">
    <span className="relative text-[#dd5a12]">
      股吧
      <i className="absolute right-0 -bottom-[5px] left-0 mx-auto h-[6px] w-[60px] rounded-full bg-[#dd5a12]" />
    </span>
    {["盘口", "资讯", "公告", "研报", "财务", "资料"].map((name) => (
      <span key={name}>{name}</span>
    ))}
  </nav>
);

const Action = ({ label, children }: { label: string; children: React.ReactNode }) => (
  <div className="flex w-[201px] flex-col items-center text-[35px] leading-[50px] text-[#666]">
    <svg viewBox="0 0 66 60" className="h-[60px] w-[66px]" fill="none" stroke="#666" strokeWidth="3" strokeLinejoin="round">
      {children}
    </svg>
    <span className="mt-[13px]">{label}</span>
  </div>
);

const BottomBar = () => (
  <footer className="flex h-[135px] bg-[#f7f8fa] pt-[9px]">
    <div className="w-[275px]">
      <svg viewBox="0 0 20 7" className="ml-[128px] h-[7px] w-5" fill="#777">
        <path d="M10 0l10 7H0z" />
      </svg>
      <div className="mt-[13px] pl-[67px] text-[38.500px] leading-[44px] text-[#d6302f]">3616.03</div>
      <div className="mt-[3px] flex items-center pl-[41px] leading-[48px]">
        <span className="w-[125px] text-[34.500px] text-[#666]">上证</span>
        <span className="text-[36px] text-[#d6302f]">0.91%</span>
      </div>
    </div>
    <Action label="交易">
      <path d="M17.500 6.500A28 28 0 0 1 58 40M50.500 50.500A28 28 0 0 1 10 16" />
      <path d="M0.500 18l9.500-3.500M66 38l-8 4" />
      <path d="M24 15l9.500 9L43 15M33.500 24v19M23 26h21M23 35h21" />
    </Action>
    <Action label="发帖">
      <path d="M46 3.500H14q-7 0-7 7v37q0 7 7 7h38q7 0 7-7V19" />
      <path d="M25 38l3-9 22-21 5 5-22 21z" fill="#666" stroke="none" />
      <path d="M52 6l3-3q4 0 4 4l-3 3z" fill="#666" />
    </Action>
    <Action label="功能">
      <rect x="8.500" y="5" width="22" height="22" rx="3" />
      <rect x="8.500" y="32" width="22" height="22" rx="3" />
      <rect x="36" y="32" width="22" height="22" rx="3" />
      <rect x="38.500" y="7.500" width="17.500" height="17.500" rx="2.500" transform="rotate(45 47.300 16.300)" />
    </Action>
    <Action label="设自选">
      <circle cx="33" cy="30" r="27" />
      <g fill="#666" stroke="none">
        <circle cx="21.500" cy="30" r="3" />
        <circle cx="33" cy="30" r="3" />
        <circle cx="44.500" cy="30" r="3" />
      </g>
    </Action>
  </footer>
);

const SystemNav = () => (
  <div className="flex h-[132px] items-center pl-[250px]">
    <svg viewBox="0 0 570 36" className="h-9 w-[570px]" fill="none" stroke="#999" strokeWidth="2.600" strokeLinejoin="round">
      <path d="M0 2h36M0 18.500h36M0 35h36" />
      <rect x="269.500" y="1.500" width="33.500" height="33.500" rx="7" />
      <path d="M563 2.500q4-2 4 2v28q0 4-4 2l-25-14q-3-2 0-4z" />
    </svg>
  </div>
);

const App: React.FC = () => {
  return (
    <div className="h-[2414px] w-[1080px] overflow-hidden bg-white font-[Roboto,'Noto_Sans_CJK_SC',sans-serif]">
      <StatusBar />
      <Header />
      <Quote />
      <Announcement />
      <PeriodTabs />
      <MaLegend />
      <CandleChart />
      <RsiPanel />
      <VolumePanel />
      <MacdPanel />
      <DateRuler />
      <Banner />
      <SectionTabs />
      <BottomBar />
      <SystemNav />
    </div>
  );
};

export default App;
